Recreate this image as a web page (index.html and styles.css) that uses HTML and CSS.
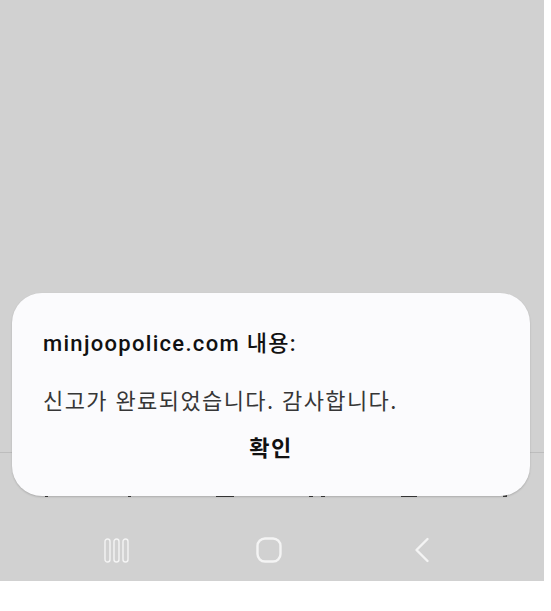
FILE: index.html
```html
<!DOCTYPE html>
<html lang="ko">
<head>
<meta charset="utf-8">
<link rel="stylesheet" href="styles.css">
</head>
<body>
<div class="screen">
  <div class="page"></div>
  <div class="toolbar">
    <span class="mark m1"></span>
    <span class="mark m2"></span>
    <span class="mark m3"></span>
    <span class="mark m4"><i></i><i></i></span>
    <span class="mark m5"></span>
    <span class="mark m6"></span>
  </div>
  <div class="navbar">
    <span class="nav-item">
      <svg width="25" height="25" viewBox="0 0 25 25"><rect x="1" y="1" width="5" height="23" rx="2.5"/><rect x="10" y="1" width="5" height="23" rx="2.5"/><rect x="19" y="1" width="5" height="23" rx="2.5"/></svg>
    </span>
    <span class="nav-item">
      <svg width="26" height="26" viewBox="0 0 26 26"><rect class="thick" x="1.5" y="1.5" width="23" height="23" rx="7.5"/></svg>
    </span>
    <span class="nav-item">
      <svg width="16" height="26" viewBox="0 0 16 26"><polyline class="thick" points="13.5,2 2.5,13 13.5,24"/></svg>
    </span>
  </div>
  <div class="dialog">
    <div class="dialog-title">minjoopolice.com 내용:</div>
    <div class="dialog-body">신고가 완료되었습니다. 감사합니다.</div>
    <div class="dialog-button">확인</div>
  </div>
</div>
</body>
</html>
```

FILE: styles.css
```css
html, body {
  margin: 0;
  padding: 0;
  background: #ffffff;
}

.screen {
  position: relative;
  width: 544px;
  height: 581px;
  background: #d1d1d1;
  display: flex;
  flex-direction: column;
  overflow: hidden;
}

.page {
  flex: 1;
}

.toolbar {
  border-top: 1px solid #bdbdbd;
  display: grid;
  grid-template-columns: repeat(6, 1fr);
  align-items: start;
  justify-items: center;
  padding-top: 41px;
  box-sizing: border-box;
  height: 67px;
}

.mark {
  display: block;
  height: 3px;
  background: #3c3c3c;
}
.m1 { width: 3px; margin-left: 2px; }
.m2 { width: 3px; margin-left: -12px; }
.m3 { width: 18px; margin-left: -4px; }
.m4 { display: flex; gap: 8px; background: none; margin-left: 0; }
.m4 i { display: block; width: 4px; height: 3px; background: #3c3c3c; }
.m5 { width: 16px; margin-left: 2px; }
.m6 { width: 4px; margin-left: 12px; }

.navbar {
  height: 62px;
  display: grid;
  grid-template-columns: repeat(3, 153px);
  justify-content: center;
  align-items: center;
  justify-items: center;
  padding-right: 6px;
  box-sizing: border-box;
}

.nav-item {
  display: flex;
  align-items: center;
  justify-content: center;
}

.nav-item svg {
  display: block;
  fill: none;
  stroke: #f4f4f4;
  stroke-width: 1.4;
}
.nav-item svg .thick {
  stroke-width: 2.4;
  stroke-linecap: round;
  stroke-linejoin: round;
}

.dialog {
  position: absolute;
  left: 12px;
  top: 293px;
  width: 518px;
  height: 203px;
  box-sizing: border-box;
  background: #fbfbfd;
  border-radius: 30px;
  box-shadow: 0 1px 2px rgba(0, 0, 0, 0.18);
  padding: 37px 31px 0 31px;
}

.dialog-title {
  font-family: Roboto, "Noto Sans CJK KR", sans-serif;
  font-weight: 500;
  font-size: 22px;
  letter-spacing: 1.3px;
  line-height: 28px;
  color: #111111;
}

.dialog-body {
  margin-top: 26px;
  font-family: "Noto Sans CJK KR", sans-serif;
  font-size: 22px;
  letter-spacing: 1.4px;
  line-height: 30px;
  color: #363636;
}

.dialog-button {
  margin-top: 17px;
  text-align: center;
  font-family: "Noto Sans CJK KR", sans-serif;
  font-weight: 700;
  font-size: 22px;
  letter-spacing: 1.5px;
  line-height: 30px;
  color: #111111;
}
```
